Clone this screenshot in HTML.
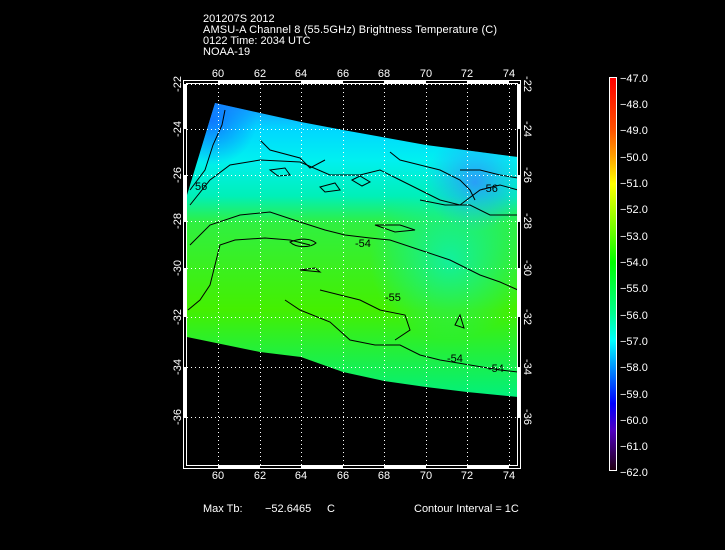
<!DOCTYPE html>
<html><head><meta charset="utf-8"><style>
html,body{margin:0;padding:0;background:#000;}
svg{display:block}
text{font-family:"Liberation Sans",sans-serif;fill:#fff;font-size:11px}
</style></head><body>
<svg width="725" height="550" viewBox="0 0 725 550" xmlns="http://www.w3.org/2000/svg">
<defs>
<linearGradient id="fld" x1="0" y1="100" x2="0" y2="400" gradientUnits="userSpaceOnUse">
<stop offset="0" stop-color="#1890ff"/>
<stop offset="0.1" stop-color="#00d8ff"/>
<stop offset="0.2" stop-color="#00f0f0"/>
<stop offset="0.32" stop-color="#00f0b8"/>
<stop offset="0.41" stop-color="#30f040"/>
<stop offset="0.7" stop-color="#44f000"/>
<stop offset="0.85" stop-color="#20f040"/>
<stop offset="1" stop-color="#00f080"/>
</linearGradient>
<radialGradient id="bl" cx="475" cy="182" r="50" gradientUnits="userSpaceOnUse">
<stop offset="0" stop-color="#3090ff" stop-opacity="0.85"/>
<stop offset="1" stop-color="#30a0ff" stop-opacity="0"/>
</radialGradient>
<radialGradient id="cy" cx="450" cy="260" r="80" gradientUnits="userSpaceOnUse">
<stop offset="0" stop-color="#00f0d0" stop-opacity="0.7"/>
<stop offset="1" stop-color="#00f0d0" stop-opacity="0"/>
</radialGradient>
<radialGradient id="cy2" cx="212" cy="120" r="45" gradientUnits="userSpaceOnUse">
<stop offset="0" stop-color="#1070ff" stop-opacity="0.9"/>
<stop offset="1" stop-color="#1070ff" stop-opacity="0"/>
</radialGradient>
<linearGradient id="cb" x1="0" y1="78" x2="0" y2="470" gradientUnits="userSpaceOnUse">
<stop offset="0" stop-color="#ff0000"/>
<stop offset="0.13" stop-color="#ff5000"/>
<stop offset="0.2" stop-color="#ffa000"/>
<stop offset="0.27" stop-color="#ffff00"/>
<stop offset="0.4" stop-color="#60ff00"/>
<stop offset="0.47" stop-color="#00ff00"/>
<stop offset="0.6" stop-color="#00ff90"/>
<stop offset="0.67" stop-color="#00ffff"/>
<stop offset="0.75" stop-color="#0080ff"/>
<stop offset="0.83" stop-color="#0000ff"/>
<stop offset="0.9" stop-color="#5000c0"/>
<stop offset="1" stop-color="#200010"/>
</linearGradient>
</defs>

<text x="203" y="22">201207S 2012</text>
<text x="203" y="33" textLength="294">AMSU-A Channel 8 (55.5GHz) Brightness Temperature (C)</text>
<text x="203" y="44">0122 Time: 2034 UTC</text>
<text x="203" y="55">NOAA-19</text>

<g>
<path d="M215,103 L301,122 L343,130 L426,145 L518,157 L518,397 L467,392 L426,387 L384,381 L343,372 L301,357 L260,352 L187,337 L187,195 Z" fill="url(#fld)"/>
<path d="M215,103 L301,122 L343,130 L426,145 L518,157 L518,397 L467,392 L426,387 L384,381 L343,372 L301,357 L260,352 L187,337 L187,195 Z" fill="url(#bl)"/>
<path d="M215,103 L301,122 L343,130 L426,145 L518,157 L518,397 L467,392 L426,387 L384,381 L343,372 L301,357 L260,352 L187,337 L187,195 Z" fill="url(#cy)"/>
<path d="M215,103 L301,122 L343,130 L426,145 L518,157 L518,397 L467,392 L426,387 L384,381 L343,372 L301,357 L260,352 L187,337 L187,195 Z" fill="url(#cy2)"/>
<g fill="none" stroke="#000" stroke-width="1">
<path d="M225,110 L222,125 L213,145 L205,170 L190,190"/>
<path d="M190,205 L210,180 L230,165 L260,160 L300,162 L330,175 L360,175 L380,170 L400,180 L430,195 L440,200 L460,205 L480,190 L500,185 L518,190"/>
<path d="M190,245 L210,225 L240,215 L270,212 L300,222 L325,230 L345,235 L370,238 L390,240 L420,250 L450,260 L480,275 L500,282 L518,290"/>
<path d="M188,310 L200,300 L210,285 L215,265 L220,245 L235,240 L265,238 L290,240 L310,245"/>
<path d="M260,140 L270,150 L300,158 L310,168 L325,160"/>
<path d="M390,152 L400,160 L420,165 L440,170 L460,180 L470,190 L475,200"/>
<path d="M285,300 L300,310 L330,322 L350,340 L375,345 L400,345 L420,355 L440,360 L470,365 L500,370 L518,372"/>
<path d="M320,290 L340,295 L360,300 L380,310 L405,315 L410,330 L395,340"/>
<path d="M460,170 L480,170 L500,175 L518,178"/>
<path d="M420,200 L445,205 L470,205 L490,215 L518,215"/>
<path d="M290,242 C300,238 310,238 316,243 C310,248 296,248 290,242 Z"/>
<path d="M320,187 L335,183 L340,190 L325,192 Z"/>
<path d="M352,180 L360,176 L370,182 L362,186 Z"/>
<path d="M375,225 L400,225 L415,230 L395,232 Z"/>
<path d="M270,170 L285,168 L290,175 L278,176 Z"/>
<path d="M455,325 L460,315 L464,328 Z"/>
<path d="M300,270 L315,268 L320,272 Z"/>
</g>
<text x="195" y="190" font-size="10" style="fill:#000">56</text>
<text x="482" y="192" font-size="10" style="fill:#000">-56</text>
<text x="355" y="247" font-size="10" style="fill:#000">-54</text>
<text x="385" y="301" font-size="10" style="fill:#000">-55</text>
<text x="447" y="362" font-size="10" style="fill:#000">-54</text>
<text x="488" y="372" font-size="10" style="fill:#000">-54</text>
</g>

<g stroke="#fff" stroke-width="1" stroke-dasharray="1,3">
<line x1="218.5" y1="84" x2="218.5" y2="466"/>
<line x1="260.5" y1="84" x2="260.5" y2="466"/>
<line x1="301.5" y1="84" x2="301.5" y2="466"/>
<line x1="343.5" y1="84" x2="343.5" y2="466"/>
<line x1="384.5" y1="84" x2="384.5" y2="466"/>
<line x1="426.5" y1="84" x2="426.5" y2="466"/>
<line x1="467.5" y1="84" x2="467.5" y2="466"/>
<line x1="509.5" y1="84" x2="509.5" y2="466"/>
<line x1="187" y1="84.5" x2="518" y2="84.5"/>
<line x1="187" y1="129.5" x2="518" y2="129.5"/>
<line x1="187" y1="175.5" x2="518" y2="175.5"/>
<line x1="187" y1="221.5" x2="518" y2="221.5"/>
<line x1="187" y1="268.5" x2="518" y2="268.5"/>
<line x1="187" y1="317.5" x2="518" y2="317.5"/>
<line x1="187" y1="367.5" x2="518" y2="367.5"/>
<line x1="187" y1="417.5" x2="518" y2="417.5"/>
</g>

<g fill="none" stroke="#fff">
<rect x="183.5" y="80.5" width="337" height="388"/>
<rect x="186.5" y="83.5" width="331" height="382"/>
</g>
<g fill="#fff">
<rect x="183" y="84" width="4" height="45"/>
<rect x="183" y="175" width="4" height="47"/>
<rect x="183" y="268" width="4" height="49"/>
<rect x="183" y="367" width="4" height="51"/>
<rect x="517" y="84" width="4" height="45"/>
<rect x="517" y="175" width="4" height="47"/>
<rect x="517" y="268" width="4" height="49"/>
<rect x="517" y="367" width="4" height="51"/>
<rect x="218" y="465" width="42" height="4"/>
<rect x="301" y="465" width="42" height="4"/>
<rect x="384" y="465" width="42" height="4"/>
<rect x="467" y="465" width="42" height="4"/>
<rect x="218" y="80" width="42" height="4"/>
<rect x="301" y="80" width="42" height="4"/>
<rect x="384" y="80" width="42" height="4"/>
<rect x="467" y="80" width="42" height="4"/>
</g>

<g text-anchor="middle">
<text x="218" y="77">60</text><text x="260" y="77">62</text><text x="301" y="77">64</text><text x="343" y="77">66</text>
<text x="384" y="77">68</text><text x="426" y="77">70</text><text x="467" y="77">72</text><text x="509" y="77">74</text>
<text x="218" y="479">60</text><text x="260" y="479">62</text><text x="301" y="479">64</text><text x="343" y="479">66</text>
<text x="384" y="479">68</text><text x="426" y="479">70</text><text x="467" y="479">72</text><text x="509" y="479">74</text>
</g>
<g text-anchor="middle">
<text transform="translate(181,84) rotate(-90)">-22</text>
<text transform="translate(181,129) rotate(-90)">-24</text>
<text transform="translate(181,175) rotate(-90)">-26</text>
<text transform="translate(181,221) rotate(-90)">-28</text>
<text transform="translate(181,268) rotate(-90)">-30</text>
<text transform="translate(181,317) rotate(-90)">-32</text>
<text transform="translate(181,367) rotate(-90)">-34</text>
<text transform="translate(181,417) rotate(-90)">-36</text>
<text transform="translate(524,84) rotate(90)">-22</text>
<text transform="translate(524,129) rotate(90)">-24</text>
<text transform="translate(524,175) rotate(90)">-26</text>
<text transform="translate(524,221) rotate(90)">-28</text>
<text transform="translate(524,268) rotate(90)">-30</text>
<text transform="translate(524,317) rotate(90)">-32</text>
<text transform="translate(524,367) rotate(90)">-34</text>
<text transform="translate(524,417) rotate(90)">-36</text>
</g>

<rect x="609.5" y="77.5" width="7" height="393" fill="url(#cb)" stroke="#fff"/>
<g>
<text x="620" y="82">−47.0</text><text x="620" y="108">−48.0</text><text x="620" y="134">−49.0</text>
<text x="620" y="161">−50.0</text><text x="620" y="187">−51.0</text><text x="620" y="213">−52.0</text>
<text x="620" y="240">−53.0</text><text x="620" y="266">−54.0</text><text x="620" y="292">−55.0</text>
<text x="620" y="319">−56.0</text><text x="620" y="345">−57.0</text><text x="620" y="371">−58.0</text>
<text x="620" y="398">−59.0</text><text x="620" y="424">−60.0</text><text x="620" y="450">−61.0</text>
<text x="620" y="476">−62.0</text>
</g>

<text x="203" y="512">Max Tb:</text>
<text x="265" y="512">−52.6465</text>
<text x="327" y="512">C</text>
<text x="414" y="512">Contour Interval = 1C</text>
</svg>
</body></html>
